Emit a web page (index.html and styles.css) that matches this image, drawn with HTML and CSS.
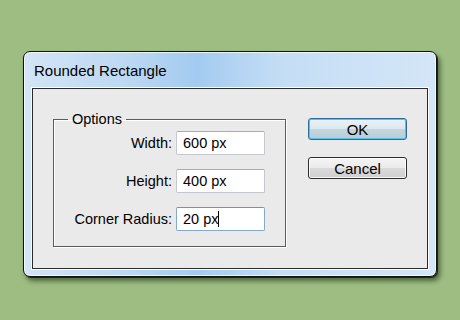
FILE: index.html
```html
<!DOCTYPE html>
<html lang="en">

<head>
    <meta charset="UTF-8">
    <title>Rounded Rectangle</title>
    <link rel="stylesheet" href="styles.css">
</head>

<body>
    <div class="dialog">
        <div class="title-bar">Rounded Rectangle</div>
        <div class="panel">
            <fieldset class="options">
                <legend>Options</legend>
                <div class="row">
                    <span class="label">Width:</span>
                    <div class="field">600 px</div>
                </div>
                <div class="row">
                    <span class="label">Height:</span>
                    <div class="field">400 px</div>
                </div>
                <div class="row">
                    <span class="label">Corner Radius:</span>
                    <div class="field focused"><span class="caret">20 px</span></div>
                </div>
            </fieldset>
            <div class="buttons">
                <button class="btn default">OK</button>
                <button class="btn">Cancel</button>
            </div>
        </div>
    </div>
</body>

</html>
```

FILE: styles.css
```css
* {
    box-sizing: border-box;
    font-family: "Liberation Sans", Arial, sans-serif;
}

body {
    margin: 0;
    background-color: #9dbd83;
    height: 320px;
    overflow: hidden;
}

.dialog {
    margin: 51px 0 0 23px;
    width: 414px;
    height: 226px;
    border: 1px solid #111;
    border-radius: 7px;
    padding: 0 8px 8px 8px;
    background: linear-gradient(90deg, #d3e5f6 0%, #bcd8f3 25%, #a3cbf0 42%, #c4ddf5 62%, #d4e6f7 100%);
    box-shadow: inset 0 0 0 1px rgba(255, 255, 255, 0.75), 1px 1px 0 #222, 3px 4px 5px rgba(20, 40, 10, 0.6);
}

.title-bar {
    height: 36px;
    line-height: 37px;
    padding-left: 2px;
    font-size: 15px;
    color: #000;
}

.panel {
    display: flex;
    height: 181px;
    border: 1px solid #2b2b2b;
    background-color: #eaeaea;
    box-shadow: 0 0 0 1px #fff;
    padding: 0 0 0 20px;
    gap: 22px;
}

.options {
    margin: 21px 0 0 0;
    width: 233px;
    height: 137px;
    border: 1px solid #5c5c5c;
    box-shadow: 1px 1px 0 #fff, inset 1px 1px 0 #fff;
    padding: 3px 0 0 0;
}

.options legend {
    font-size: 14.5px;
    line-height: 18px;
    padding: 0 4px;
    margin-left: 14px;
    color: #000;
}

.row {
    display: flex;
    align-items: center;
    justify-content: flex-end;
    height: 24px;
    margin-bottom: 14px;
    padding-right: 20px;
}

.label {
    font-size: 14.5px;
    margin-right: 4px;
    color: #000;
}

.field {
    width: 89px;
    height: 24px;
    line-height: 22px;
    padding-left: 6px;
    font-size: 14.5px;
    background-color: #fff;
    border: 1px solid #c4c7cc;
    border-top-color: #a9acb2;
    border-radius: 2px;
    color: #000;
}

.field.focused {
    border-color: #86a8cc;
    border-top-color: #6f93bd;
}

.caret {
    border-right: 1px solid #000;
}

.buttons {
    display: flex;
    flex-direction: column;
    gap: 17px;
    margin-top: 29px;
}

.btn {
    width: 99px;
    height: 22px;
    padding: 0;
    font-size: 15px;
    color: #000;
    border: 1px solid #2e2e2e;
    border-radius: 3px;
    background: linear-gradient(180deg, #f4f4f4 0%, #ebebeb 48%, #dadada 52%, #cfcfcf 100%);
    box-shadow: inset 0 0 0 1px rgba(255, 255, 255, 0.8);
}

.btn.default {
    border-color: #2c6f9e;
    background: linear-gradient(180deg, #e9f3f8 0%, #dbe8ef 48%, #c4d6e0 52%, #b8cdd8 100%);
    box-shadow: inset 0 0 0 1px #58c0e6;
}
```
